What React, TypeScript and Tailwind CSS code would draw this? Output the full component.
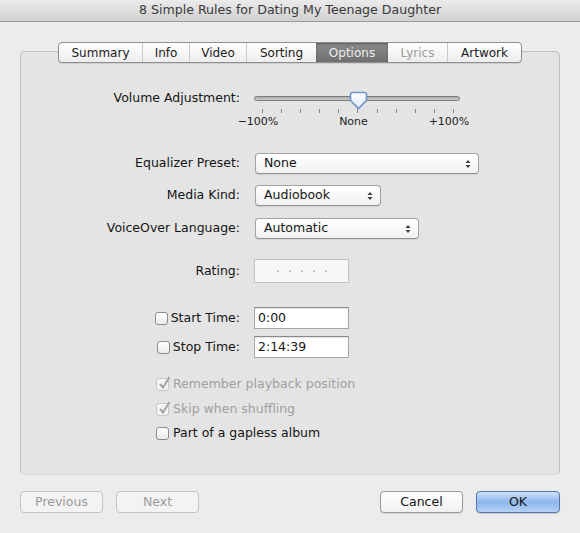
import React from "react";

const tabs = [
  { label: "Summary", cls: "w-[83px] text-[#1a1a1a]" },
  { label: "Info", cls: "w-[47px] text-[#1a1a1a] border-l border-[#c9c9c9]" },
  { label: "Video", cls: "w-[57px] text-[#1a1a1a] border-l border-[#c9c9c9]" },
  { label: "Sorting", cls: "w-[70px] text-[#1a1a1a] border-l border-[#c9c9c9]" },
  {
    label: "Options",
    cls: "w-[72px] text-[#ededed] bg-gradient-to-b from-[#8a8a8a] to-[#6f6f6f] shadow-[inset_0_1px_2px_rgba(0,0,0,0.35)]",
  },
  { label: "Lyrics", cls: "w-[59px] text-[#9c9c9c]" },
  { label: "Artwork", cls: "w-[74px] text-[#1a1a1a] border-l border-[#c9c9c9]" },
];

const Arrows = () => (
  <svg width="6" height="10" viewBox="0 0 6 10">
    <path d="M0.5 4 L3 1 L5.5 4 Z" fill="#3c3c3c" />
    <path d="M0.5 6 L3 9 L5.5 6 Z" fill="#3c3c3c" />
  </svg>
);

const Popup = ({ value, width }: { value: string; width: string }) => (
  <div
    className={`flex h-[21px] items-center justify-between rounded-[4px] border border-[#a2a2a2] border-b-[#8e8e8e] bg-gradient-to-b from-white to-[#f1f1f1] pl-[8px] pr-[7px] text-[#141414] shadow-[0_1px_1px_rgba(0,0,0,0.08)] ${width}`}
  >
    <span>{value}</span>
    <Arrows />
  </div>
);

const Checkbox = ({ checked = false, disabled = false }: { checked?: boolean; disabled?: boolean }) => (
  <span
    className={`relative inline-block h-[13px] w-[13px] shrink-0 rounded-[3px] border ${
      disabled
        ? "border-[#c6c6c6] bg-[#f4f4f4]"
        : "border-[#8c8c8c] bg-gradient-to-b from-white to-[#ebebeb]"
    }`}
  >
    {checked && (
      <svg className="absolute -top-[3px] left-[1px]" width="13" height="14" viewBox="0 0 13 14">
        <path d="M2 8 L5 11.5 L11.5 1" fill="none" stroke="#a3a3a3" strokeWidth="2" />
      </svg>
    )}
  </span>
);

const TextField = ({ value }: { value: string }) => (
  <div className="flex h-[22px] w-[95px] items-center border border-[#a6a6a6] border-t-[#8a8a8a] bg-white pl-[3px] text-[#141414] shadow-[inset_0_1px_1px_rgba(0,0,0,0.12)]">
    {value}
  </div>
);

const Label = ({ children }: { children: React.ReactNode }) => (
  <div className="flex w-[219px] items-center justify-end text-[#141414]">{children}</div>
);

const Button = ({ label, cls }: { label: string; cls: string }) => (
  <div className={`flex h-[22px] items-center justify-center rounded-[4px] border ${cls}`}>{label}</div>
);

export default function App() {
  return (
    <div className="flex h-[533px] w-[580px] flex-col bg-[#ececec] font-['DejaVu_Sans',sans-serif] text-[12.5px] leading-none">
      <div className="flex h-[22px] items-center justify-center border-b border-[#9b9b9b] bg-gradient-to-b from-[#ebebeb] to-[#d0d0d0] text-[12.6px] text-[#3a3a3a]">
        8 Simple Rules for Dating My Teenage Daughter
      </div>

      <div className="mx-[20px] mt-[29px] flex h-[424px] flex-col rounded-[5px] border border-[#bfbfbf] border-b-[#d6d6d6] bg-[#e4e4e4]">
        {/* tab bar */}
        <div className="-mt-[10px] flex justify-center">
          <div className="flex h-[21px] overflow-hidden rounded-[4px] border border-[#8f8f8f] bg-gradient-to-b from-white to-[#ededed] text-[12px] shadow-[0_1px_1px_rgba(0,0,0,0.1)]">
            {tabs.map((t) => (
              <div key={t.label} className={`flex items-center justify-center ${t.cls}`}>
                {t.label}
              </div>
            ))}
          </div>
        </div>

        {/* volume */}
        <div className="mt-[24px] flex h-[22px] items-center">
          <Label>Volume Adjustment:</Label>
          <div className="relative ml-[14px] flex h-[22px] w-[206px] items-center">
            <div className="h-[5px] w-full rounded-full border border-[#7c7c7c] bg-gradient-to-b from-[#a8a8a8] to-[#cfcfcf]" />
            <svg className="absolute left-[95px] top-[4px]" width="19" height="19" viewBox="0 0 19 19">
              <defs>
                <linearGradient id="thumb" x1="0" y1="0" x2="0" y2="1">
                  <stop offset="0" stopColor="#ffffff" />
                  <stop offset="1" stopColor="#dbe7f7" />
                </linearGradient>
              </defs>
              <path
                d="M3.5 1.5 H15.5 Q17.5 1.5 17.5 3.5 V9.5 L9.5 17.5 L1.5 9.5 V3.5 Q1.5 1.5 3.5 1.5 Z"
                fill="url(#thumb)"
                stroke="#6f93c8"
                strokeWidth="1.6"
              />
            </svg>
          </div>
        </div>
        <div className="ml-[241px] flex h-[5px] w-[192px] justify-between">
          {Array.from({ length: 11 }).map((_, i) => (
            <div key={i} className="h-[4px] w-px bg-[#8a8a8a]" />
          ))}
        </div>
        <div className="ml-[212px] mt-[2px] flex h-[14px] w-[241px] justify-between text-[11px] text-[#222]">
          <span className="w-[50px] text-center">−100%</span>
          <span className="w-[50px] text-center">None</span>
          <span className="w-[50px] text-center">+100%</span>
        </div>

        <div className="mt-[23px] flex items-center">
          <Label>Equalizer Preset:</Label>
          <div className="ml-[15px]">
            <Popup value="None" width="w-[224px]" />
          </div>
        </div>
        <div className="mt-[11px] flex items-center">
          <Label>Media Kind:</Label>
          <div className="ml-[15px]">
            <Popup value="Audiobook" width="w-[126px]" />
          </div>
        </div>
        <div className="mt-[12px] flex items-center">
          <Label>VoiceOver Language:</Label>
          <div className="ml-[15px]">
            <Popup value="Automatic" width="w-[164px]" />
          </div>
        </div>

        <div className="mt-[20px] flex items-center">
          <Label>Rating:</Label>
          <div className="ml-[14px] flex h-[24px] w-[95px] items-center justify-center gap-[10px] border border-[#c3c3c3] bg-[#f7f7f7]">
            {Array.from({ length: 5 }).map((_, i) => (
              <span key={i} className="h-[2px] w-[2px] rounded-full bg-[#b0b0b0]" />
            ))}
          </div>
        </div>

        <div className="mt-[24px] flex items-center">
          <Label>
            <Checkbox />
            <span className="ml-[3px]">Start Time:</span>
          </Label>
          <div className="ml-[14px]">
            <TextField value="0:00" />
          </div>
        </div>
        <div className="mt-[7px] flex items-center">
          <Label>
            <Checkbox />
            <span className="ml-[3px]">Stop Time:</span>
          </Label>
          <div className="ml-[14px]">
            <TextField value="2:14:39" />
          </div>
        </div>

        <div className="ml-[135px] mt-[17px] flex h-[18px] items-center gap-[4px] text-[#a0a0a0]">
          <Checkbox checked disabled />
          <span>Remember playback position</span>
        </div>
        <div className="ml-[135px] mt-[7px] flex h-[18px] items-center gap-[4px] text-[#a0a0a0]">
          <Checkbox checked disabled />
          <span>Skip when shuffling</span>
        </div>
        <div className="ml-[135px] mt-[6px] flex h-[18px] items-center gap-[4px] text-[#141414]">
          <Checkbox />
          <span>Part of a gapless album</span>
        </div>
      </div>

      <div className="mt-[16px] flex justify-between px-[20px]">
        <div className="flex gap-[13px]">
          <Button label="Previous" cls="w-[83px] border-[#c4c4c4] bg-[#f3f3f3] text-[#9a9a9a]" />
          <Button label="Next" cls="w-[83px] border-[#c4c4c4] bg-[#f3f3f3] text-[#9a9a9a]" />
        </div>
        <div className="flex gap-[13px]">
          <Button
            label="Cancel"
            cls="w-[83px] border-[#9a9a9a] bg-gradient-to-b from-white to-[#f0f0f0] text-[#141414] shadow-[0_1px_1px_rgba(0,0,0,0.1)]"
          />
          <Button
            label="OK"
            cls="w-[84px] border-[#5677ad] bg-gradient-to-b from-[#cfe1f8] via-[#8fb7ed] to-[#b3d1f6] text-[#141414] shadow-[0_1px_1px_rgba(0,0,0,0.15)]"
          />
        </div>
      </div>
    </div>
  );
}
